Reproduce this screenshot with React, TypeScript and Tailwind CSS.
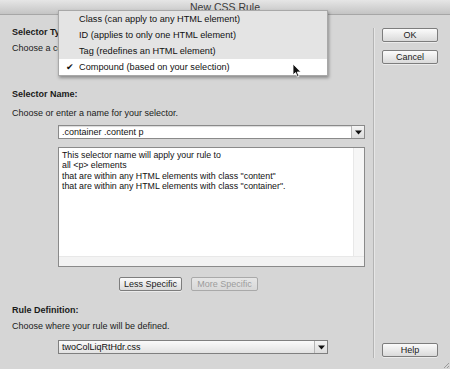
import React from "react";

function Arrow() {
  return (
    <div className="w-[13px] h-full border-l border-[#b5b5b5] bg-gradient-to-b from-[#f4f4f4] to-[#dcdcdc] flex items-center justify-center">
      <svg width="7" height="5" viewBox="0 0 7 5">
        <path d="M0 0.5 H7 L3.5 4.5 Z" fill="#111" />
      </svg>
    </div>
  );
}

function Btn({ label, w, disabled }: { label: string; w: number; disabled?: boolean }) {
  return (
    <div
      style={{ width: w }}
      className={
        "h-[14px] flex items-center justify-center rounded-[2px] border text-[9px] leading-[10px] bg-gradient-to-b " +
        (disabled
          ? "border-[#a9a9a9] from-[#e6e6e6] to-[#d8d8d8] text-[#9c9c9c]"
          : "border-[#7d7d7d] from-[#fbfbfb] to-[#dadada] text-[#1a1a1a] shadow-[0_1px_0_rgba(255,255,255,0.5)]")
      }
    >
      {label}
    </div>
  );
}

export default function App() {
  const lbl = "text-[9px] leading-[11px] text-[#1a1a1a]";
  return (
    <div className="relative w-[450px] h-[369px] overflow-hidden bg-[#d6d6d6] font-['Liberation_Sans',Arial,sans-serif]">
      {/* title bar */}
      <div className="h-[15px] bg-gradient-to-b from-[#e6e6e6] to-[#c4c4c4] border-b border-[#a6a6a6] flex justify-center">
        <span className="text-[10.5px] leading-[12px] mt-[1px] text-[#3a3a3a]">New CSS Rule</span>
      </div>

      <div className="flex h-[354px]">
        {/* left column */}
        <div className="w-[373px] pl-[12px] pt-[12px] flex flex-col">
          <div className={lbl + " font-bold w-[46px] overflow-hidden whitespace-nowrap"}>Selector Type:</div>
          <div className={lbl + " mt-[5px] w-[46px] overflow-hidden whitespace-nowrap"}>
            Choose a contextual selector type for your CSS rule.
          </div>
          <div className="mt-[5px] h-[15px]" />

          <div className={lbl + " font-bold mt-[15px]"}>Selector Name:</div>
          <div className={lbl + " mt-[8px]"}>Choose or enter a name for your selector.</div>

          <div className="mt-[6px] ml-[46px] w-[307px] h-[14px] bg-white border border-[#8a8a8a] flex shadow-[inset_0_1px_1px_rgba(0,0,0,0.15)]">
            <div className="flex-1 pl-[3px] text-[9px] leading-[12px] text-[#111]">.container .content p</div>
            <Arrow />
          </div>

          <div className="mt-[8px] ml-[46px] w-[307px] h-[120px] bg-white border border-[#8a8a8a] flex flex-col">
            <div className="flex-1 flex">
              <div className="flex-1 pl-[3px] pt-[2px] text-[8.8px] leading-[10.3px] text-[#111]">
                <div>This selector name will apply your rule to</div>
                <div>all &lt;p&gt; elements</div>
                <div>that are within any HTML elements with class "content"</div>
                <div>that are within any HTML elements with class "container".</div>
              </div>
              <div className="w-[11px] bg-[#f6f6f6] border-l border-[#e8e8e8]" />
            </div>
            <div className="h-[10px] bg-[#f3f3f3] border-t border-[#e8e8e8]" />
          </div>

          <div className="mt-[10px] ml-[107px] flex gap-[9px]">
            <Btn label="Less Specific" w={63} />
            <Btn label="More Specific" w={67} disabled />
          </div>

          <div className={lbl + " font-bold mt-[14px]"}>Rule Definition:</div>
          <div className={lbl + " mt-[5px]"}>Choose where your rule will be defined.</div>
          <div className="mt-[8px] ml-[46px] w-[270px] h-[14px] bg-gradient-to-b from-[#fafafa] to-[#e2e2e2] border border-[#7f7f7f] flex">
            <div className="flex-1 pl-[3px] text-[9px] leading-[12px] text-[#111]">twoColLiqRtHdr.css</div>
            <Arrow />
          </div>
        </div>

        {/* divider */}
        <div className="mt-[13px] h-[330px] w-[2px] border-l border-[#b4b4b4] bg-[#e6e6e6]" />

        {/* right column */}
        <div className="flex-1 pl-[7px] pt-[13px] flex flex-col">
          <Btn label="OK" w={56} />
          <div className="mt-[8px]">
            <Btn label="Cancel" w={56} />
          </div>
          <div className="mt-[279px]">
            <Btn label="Help" w={56} />
          </div>
        </div>
      </div>

      {/* popup menu */}
      <div className="absolute left-[58px] top-[10px] w-[270px] h-[66px] bg-[#e4e4e4] border border-[#a8a8a8] shadow-[1px_2px_3px_rgba(0,0,0,0.35)] text-[9.2px] text-[#111]">
        <div className="h-[16px] leading-[16px] pl-[20px]">Class (can apply to any HTML element)</div>
        <div className="h-[16px] leading-[16px] pl-[20px]">ID (applies to only one HTML element)</div>
        <div className="h-[16px] leading-[16px] pl-[20px]">Tag (redefines an HTML element)</div>
        <div className="h-[16px] leading-[16px] bg-white flex">
          <span className="w-[20px] pl-[7px] text-[9px]">✔</span>
          <span>Compound (based on your selection)</span>
        </div>
      </div>

      {/* mouse cursor */}
      <svg className="absolute left-[292px] top-[63px]" width="11" height="15" viewBox="0 0 11 15">
        <path d="M1 1 L1 12 L3.5 9.5 L5.5 14 L7 13.3 L5.2 9 L8.8 9 Z" fill="#111" stroke="#fff" strokeWidth="0.8" />
      </svg>

      {/* resize grip */}
      <svg className="absolute right-[1px] bottom-[1px]" width="6" height="6" viewBox="0 0 6 6">
        <path d="M6 1 L1 6 M6 4 L4 6" stroke="#8a8a8a" strokeWidth="0.8" />
      </svg>
    </div>
  );
}
